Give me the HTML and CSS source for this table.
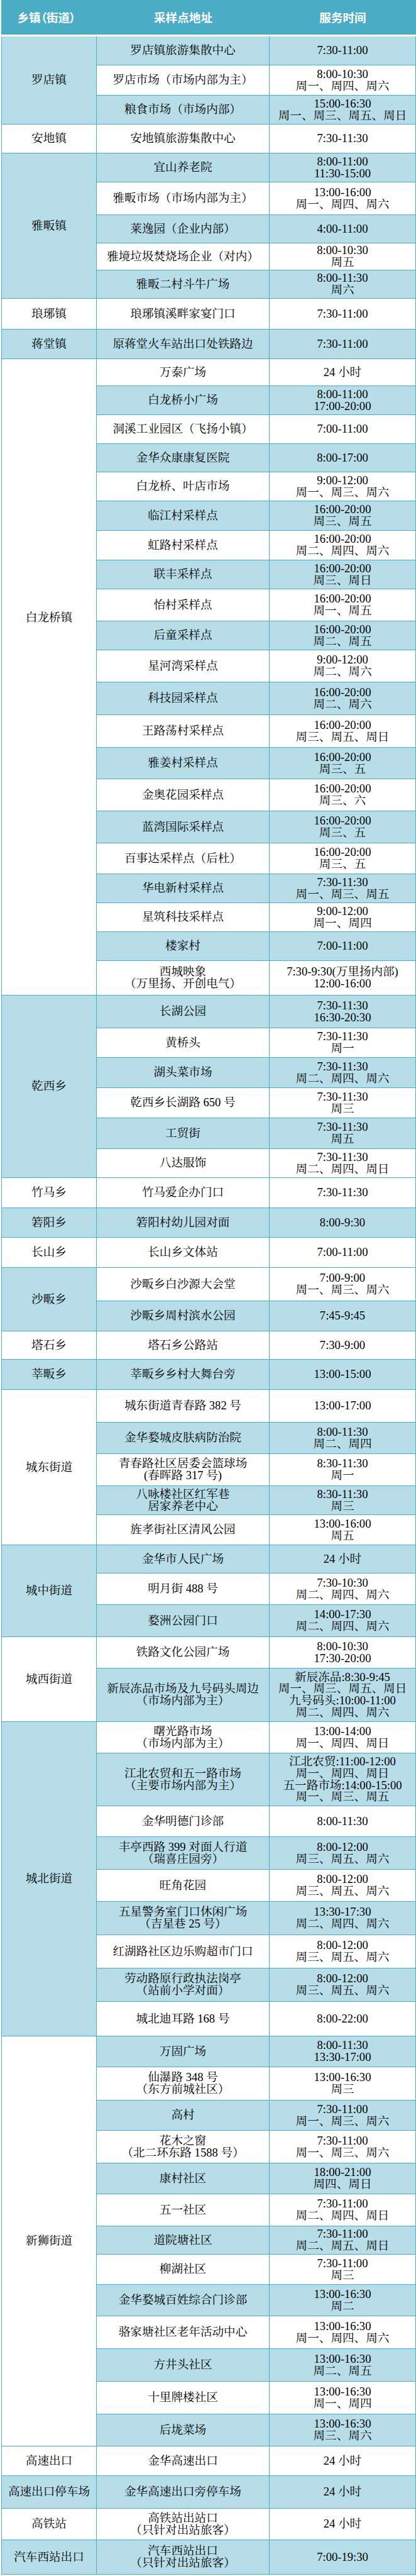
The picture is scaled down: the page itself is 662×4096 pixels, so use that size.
FILE: index.html
```html
<!DOCTYPE html>
<html lang="zh-CN">
<head>
<meta charset="utf-8">
<title>采样点</title>
<link rel="stylesheet" href="styles.css">
</head>
<body>
<div class="head">
  <div class="hcell hfirst">乡镇（街道）</div>
  <div class="hcell">采样点地址</div>
  <div class="hcell">服务时间</div>
</div>
<div class="sched">
  <div class="c c1 bl s3">罗店镇</div>
  <div class="c c2 bl">罗店镇旅游集散中心</div><div class="c c3 bl">7:30-11:00</div>
  <div class="c c2">罗店市场（市场内部为主）</div><div class="c c3">8:00-10:30<br>周一、周四、周六</div>
  <div class="c c2 bl">粮食市场（市场内部）</div><div class="c c3 bl">15:00-16:30<br>周一、周三、周五、周日</div>

  <div class="c c1">安地镇</div>
  <div class="c c2">安地镇旅游集散中心</div><div class="c c3">7:30-11:30</div>

  <div class="c c1 bl s5">雅畈镇</div>
  <div class="c c2 bl">宜山养老院</div><div class="c c3 bl">8:00-11:00<br>11:30-15:00</div>
  <div class="c c2">雅畈市场（市场内部为主）</div><div class="c c3">13:00-16:00<br>周一、周四、周六</div>
  <div class="c c2 bl">莱逸园（企业内部）</div><div class="c c3 bl">4:00-11:00</div>
  <div class="c c2">雅境垃圾焚烧场企业（对内）</div><div class="c c3">8:00-10:30<br>周五</div>
  <div class="c c2 bl">雅畈二村斗牛广场</div><div class="c c3 bl">8:00-11:30<br>周六</div>

  <div class="c c1">琅琊镇</div>
  <div class="c c2">琅琊镇溪畔家宴门口</div><div class="c c3">7:30-11:00</div>

  <div class="c c1 bl">蒋堂镇</div>
  <div class="c c2 bl">原蒋堂火车站出口处铁路边</div><div class="c c3 bl">7:30-11:00</div>

  <div class="c c1 s21 lift">白龙桥镇</div>
  <div class="c c2">万泰广场</div><div class="c c3">24 小时</div>
  <div class="c c2 bl">白龙桥小广场</div><div class="c c3 bl">8:00-11:00<br>17:00-20:00</div>
  <div class="c c2">洞溪工业园区（飞扬小镇）</div><div class="c c3">7:00-11:00</div>
  <div class="c c2 bl">金华众康康复医院</div><div class="c c3 bl">8:00-17:00</div>
  <div class="c c2">白龙桥、叶店市场</div><div class="c c3">9:00-12:00<br>周一、周三、周六</div>
  <div class="c c2 bl">临江村采样点</div><div class="c c3 bl">16:00-20:00<br>周三、周五</div>
  <div class="c c2">虹路村采样点</div><div class="c c3">16:00-20:00<br>周二、周四、周六</div>
  <div class="c c2 bl">联丰采样点</div><div class="c c3 bl">16:00-20:00<br>周三、周日</div>
  <div class="c c2">怡村采样点</div><div class="c c3">16:00-20:00<br>周一、周五</div>
  <div class="c c2 bl">后童采样点</div><div class="c c3 bl">16:00-20:00<br>周二、周五</div>
  <div class="c c2">星河湾采样点</div><div class="c c3">9:00-12:00<br>周二、周六</div>
  <div class="c c2 bl">科技园采样点</div><div class="c c3 bl">16:00-20:00<br>周二、周六</div>
  <div class="c c2">王路荡村采样点</div><div class="c c3">16:00-20:00<br>周三、周五、周日</div>
  <div class="c c2 bl">雅姜村采样点</div><div class="c c3 bl">16:00-20:00<br>周三、五</div>
  <div class="c c2">金奥花园采样点</div><div class="c c3">16:00-20:00<br>周三、六</div>
  <div class="c c2 bl">蓝湾国际采样点</div><div class="c c3 bl">16:00-20:00<br>周三、五</div>
  <div class="c c2">百事达采样点（后杜）</div><div class="c c3">16:00-20:00<br>周三、五</div>
  <div class="c c2 bl">华电新村采样点</div><div class="c c3 bl">7:30-11:30<br>周一、周三、周五</div>
  <div class="c c2">星筑科技采样点</div><div class="c c3">9:00-12:00<br>周一、周四</div>
  <div class="c c2 bl">楼家村</div><div class="c c3 bl">7:00-11:00</div>
  <div class="c c2">西城映象<br>（万里扬、开创电气）</div><div class="c c3">7:30-9:30(万里扬内部)<br>12:00-16:00</div>

  <div class="c c1 bl s6">乾西乡</div>
  <div class="c c2 bl">长湖公园</div><div class="c c3 bl">7:30-11:30<br>16:30-20:30</div>
  <div class="c c2">黄桥头</div><div class="c c3">7:30-11:30<br>周一</div>
  <div class="c c2 bl">湖头菜市场</div><div class="c c3 bl">7:30-11:30<br>周二、周四、周六</div>
  <div class="c c2">乾西乡长湖路 650 号</div><div class="c c3">7:30-11:30<br>周三</div>
  <div class="c c2 bl">工贸街</div><div class="c c3 bl">7:30-11:30<br>周五</div>
  <div class="c c2">八达服饰</div><div class="c c3">7:30-11:30<br>周二、周四、周日</div>

  <div class="c c1">竹马乡</div>
  <div class="c c2">竹马爱企办门口</div><div class="c c3">7:30-11:30</div>

  <div class="c c1 bl">箬阳乡</div>
  <div class="c c2 bl">箬阳村幼儿园对面</div><div class="c c3 bl">8:00-9:30</div>

  <div class="c c1">长山乡</div>
  <div class="c c2">长山乡文体站</div><div class="c c3">7:00-11:00</div>

  <div class="c c1 bl s2">沙畈乡</div>
  <div class="c c2">沙畈乡白沙源大会堂</div><div class="c c3">7:00-9:00<br>周一、周三、周六</div>
  <div class="c c2 bl">沙畈乡周村滨水公园</div><div class="c c3 bl">7:45-9:45</div>

  <div class="c c1">塔石乡</div>
  <div class="c c2">塔石乡公路站</div><div class="c c3">7:30-9:00</div>

  <div class="c c1 bl">莘畈乡</div>
  <div class="c c2 bl">莘畈乡乡村大舞台旁</div><div class="c c3 bl">13:00-15:00</div>

  <div class="c c1 s5">城东街道</div>
  <div class="c c2">城东街道青春路 382 号</div><div class="c c3">13:00-17:00</div>
  <div class="c c2 bl">金华婺城皮肤病防治院</div><div class="c c3 bl">8:00-11:30<br>周二、周四</div>
  <div class="c c2">青春路社区居委会篮球场<br>(春晖路 317 号)</div><div class="c c3">8:30-11:30<br>周一</div>
  <div class="c c2 bl">八咏楼社区红军巷<br>居家养老中心</div><div class="c c3 bl">8:30-11:30<br>周三</div>
  <div class="c c2">旌孝街社区清风公园</div><div class="c c3">13:00-16:00<br>周五</div>

  <div class="c c1 bl s3">城中街道</div>
  <div class="c c2 bl">金华市人民广场</div><div class="c c3 bl">24 小时</div>
  <div class="c c2">明月街 488 号</div><div class="c c3">7:30-10:30<br>周二、周四、周六</div>
  <div class="c c2 bl">婺洲公园门口</div><div class="c c3 bl">14:00-17:30<br>周二、周四、周六</div>

  <div class="c c1 s2">城西街道</div>
  <div class="c c2">铁路文化公园广场</div><div class="c c3">8:00-10:30<br>17:30-20:00</div>
  <div class="c c2 bl">新辰冻品市场及九号码头周边<br>（市场内部为主）</div><div class="c c3 bl">新辰冻品:8:30-9:45<br>周一、周三、周五、周日<br>九号码头:10:00-11:00<br>周二、周四、周六</div>

  <div class="c c1 bl s9">城北街道</div>
  <div class="c c2">曙光路市场<br>（市场内部为主）</div><div class="c c3">13:00-14:00<br>周一、周四、周日</div>
  <div class="c c2 bl">江北农贸和五一路市场<br>（主要市场内部为主）</div><div class="c c3 bl">江北农贸:11:00-12:00<br>周一、周四、周日<br>五一路市场:14:00-15:00<br>周一、周三、周五</div>
  <div class="c c2">金华明德门诊部</div><div class="c c3">8:00-11:30</div>
  <div class="c c2 bl">丰亭西路 399 对面人行道<br>（瑞喜庄园旁）</div><div class="c c3 bl">8:00-12:00<br>周三、周五、周六</div>
  <div class="c c2">旺角花园</div><div class="c c3">8:00-12:00<br>周三、周五、周六</div>
  <div class="c c2 bl">五星警务室门口休闲广场<br>（吉星巷 25 号）</div><div class="c c3 bl">13:30-17:30<br>周二、周四、周六</div>
  <div class="c c2">红湖路社区边乐购超市门口</div><div class="c c3">8:00-12:00<br>周三、周五、周六</div>
  <div class="c c2 bl">劳动路原行政执法岗亭<br>（站前小学对面）</div><div class="c c3 bl">8:00-12:00<br>周三、周五、周六</div>
  <div class="c c2">城北迪耳路 168 号</div><div class="c c3">8:00-22:00</div>

  <div class="c c1 s13">新狮街道</div>
  <div class="c c2 bl">万固广场</div><div class="c c3 bl">8:00-11:30<br>13:30-17:00</div>
  <div class="c c2">仙瀑路 348 号<br>（东方前城社区）</div><div class="c c3">13:00-16:30<br>周三</div>
  <div class="c c2 bl">高村</div><div class="c c3 bl">7:30-11:00<br>周一、周三、周六</div>
  <div class="c c2">花木之窗<br>（北二环东路 1588 号）</div><div class="c c3">7:30-11:00<br>周一、周三、周六</div>
  <div class="c c2 bl">康村社区</div><div class="c c3 bl">18:00-21:00<br>周四、周日</div>
  <div class="c c2">五一社区</div><div class="c c3">7:30-11:00<br>周二、周四、周日</div>
  <div class="c c2 bl">道院塘社区</div><div class="c c3 bl">7:30-11:00<br>周二、周五、周日</div>
  <div class="c c2">柳湖社区</div><div class="c c3">7:30-11:00<br>周三</div>
  <div class="c c2 bl">金华婺城百姓综合门诊部</div><div class="c c3 bl">13:00-16:30<br>周二</div>
  <div class="c c2">骆家塘社区老年活动中心</div><div class="c c3">13:00-16:30<br>周一、周四、周六</div>
  <div class="c c2 bl">方井头社区</div><div class="c c3 bl">13:00-16:30<br>周二、周五</div>
  <div class="c c2">十里牌楼社区</div><div class="c c3">13:00-16:30<br>周一、周四</div>
  <div class="c c2 bl">后垅菜场</div><div class="c c3 bl">13:00-16:30<br>周三、周六</div>

  <div class="c c1">高速出口</div>
  <div class="c c2">金华高速出口</div><div class="c c3">24 小时</div>

  <div class="c c1 bl">高速出口停车场</div>
  <div class="c c2 bl">金华高速出口旁停车场</div><div class="c c3 bl">24 小时</div>

  <div class="c c1">高铁站</div>
  <div class="c c2">高铁站出站口<br>（只针对出站旅客）</div><div class="c c3">24 小时</div>

  <div class="c c1 bl">汽车西站出口</div>
  <div class="c c2 bl">汽车西站出口<br>（只针对出站旅客）</div><div class="c c3 bl">7:00-19:30</div>
</div>
</body>
</html>
```
FILE: styles.css
```css
html, body {
  margin: 0;
  padding: 0;
  background: #ffffff;
}

body {
  width: 662px;
  font-family: "Liberation Serif", "Noto Serif CJK SC", "Noto Sans CJK SC", serif;
  color: #000000;
}

.head {
  margin-left: 2px;
  width: 660px;
  height: 55px;
  margin-bottom: 3px;
  background: #4BACC6;
  display: grid;
  grid-template-columns: 152px 275px 233px;
  align-items: center;
}

.hcell {
  text-align: center;
  color: #ffffff;
  font-family: "Noto Sans CJK SC", sans-serif;
  font-weight: 700;
  font-size: 18.6px;
  line-height: 1;
  white-space: nowrap;
}

.hfirst {
  font-feature-settings: "palt";
  padding-right: 8px;
}

.sched {
  margin-left: 2px;
  width: 660px;
  display: grid;
  grid-template-columns: 152px 275px 233px;
  grid-template-rows:
    46px 48px 46px 46px 46px 52px 45px 43px 45px 49px
    47px 43px 46px 46px 45px 46px 47px 47px 46px 51px
    46px 51px 52px 52px 50px 51px 51px 49px 46px 46px
    46px 55px 52px 47px 48px 48px 49px 46px 48px 47px
    48px 53px 48px 45px 48px 52px 50px 51px 46px 48px
    45px 50px 51px 50px 85px 50px 84px 49px 52px 51px
    53px 53px 53px 55px 49px 53px 48px 52px 49px 51px
    45px 48px 50px 52px 52px 52px 51px 47px 52px 50px 55px;
}

.c {
  box-sizing: border-box;
  display: flex;
  align-items: center;
  justify-content: center;
  text-align: center;
  white-space: nowrap;
  font-size: 18.6px;
  line-height: 18.6px;
  background: #ffffff;
  border-right: 1px solid #4BACC6;
  border-bottom: 1px solid #4BACC6;
  min-width: 0;
}

.c1 {
  grid-column: 1;
  border-left: 1px solid #4BACC6;
}

.c2 {
  grid-column: 2;
}

.c3 {
  grid-column: 3;
}

.bl {
  background: #B7DDE8;
}

.s2 { grid-row: span 2; }
.s3 { grid-row: span 3; }
.s5 { grid-row: span 5; }
.s6 { grid-row: span 6; }
.s9 { grid-row: span 9; }
.s13 { grid-row: span 13; }
.s21 { grid-row: span 21; }

.lift {
  padding-bottom: 188px;
}
```
